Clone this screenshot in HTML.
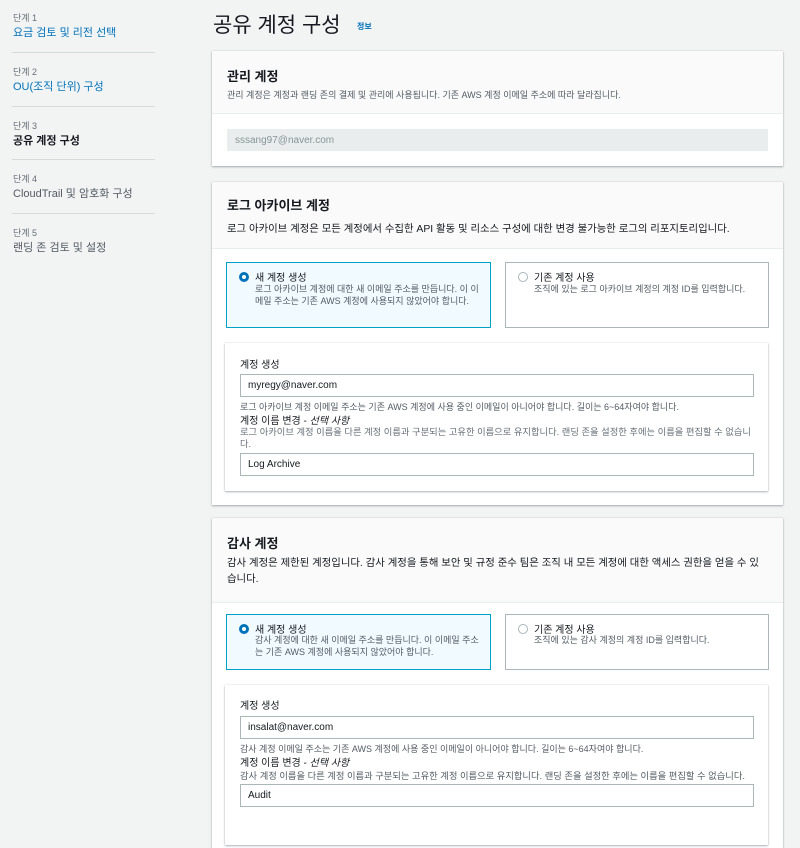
<!DOCTYPE html>
<html><head><meta charset="utf-8"><style>
*{box-sizing:border-box;margin:0;padding:0}
body{width:800px;height:829px;overflow:hidden;background:#f2f3f3;font-family:"Liberation Sans","Noto Sans CJK KR",sans-serif;color:#16191f;position:relative}
.a{position:absolute;white-space:nowrap}
.sl{font-size:9px;color:#687078}
.lk{font-size:11px;color:#0073bb}
.dv{position:absolute;left:12px;width:143px;height:1px;background:#d5dbdb}
.card{position:absolute;left:212px;width:571px;background:#fff;box-shadow:0 1px 2px rgba(0,28,36,.3),0 0 1px rgba(0,28,36,.2)}
.hd{border-bottom:1px solid #eaeded;background:#fafafa}
.inp{position:absolute;border:1px solid #aab7b8;background:#fff;font-size:10px;padding-left:7px;display:flex;align-items:center}
.tile{position:absolute;border:1px solid #aab7b8;background:#fff}
.tile.s{background:#f1faff;border-color:#00a1c9}
.rd{position:absolute;left:12px;top:9px;width:10px;height:10px;border-radius:50%;border:1px solid #aab7b8;background:#fff}
.rd.s{border:3px solid #0073bb}
.t1{font-size:10px}
.t2{font-size:9px;color:#545b64;line-height:12px;white-space:normal}
.sm{font-size:9px;color:#545b64}
</style></head><body>
<div class="a sl" style="left:13px;top:11px">단계 1</div>
<div class="a lk" style="left:13px;top:24px">요금 검토 및 리전 선택</div>
<div class="dv" style="top:52px"></div>
<div class="a sl" style="left:13px;top:65px">단계 2</div>
<div class="a lk" style="left:13px;top:78px">OU(조직 단위) 구성</div>
<div class="dv" style="top:106px"></div>
<div class="a sl" style="left:13px;top:119px">단계 3</div>
<div class="a" style="left:13px;top:132px;font-size:11px;font-weight:bold">공유 계정 구성</div>
<div class="dv" style="top:159px"></div>
<div class="a sl" style="left:13px;top:172px">단계 4</div>
<div class="a" style="left:13px;top:185px;font-size:11px;color:#545b64">CloudTrail 및 암호화 구성</div>
<div class="dv" style="top:213px"></div>
<div class="a sl" style="left:13px;top:226px">단계 5</div>
<div class="a" style="left:13px;top:239px;font-size:11px;color:#545b64">랜딩 존 검토 및 설정</div>

<div class="a" style="left:213px;top:9px;font-size:21px;color:#16191f">공유 계정 구성</div>
<div class="a" style="left:357px;top:21px;font-size:8px;font-weight:bold;color:#0073bb">정보</div>

<div class="card" style="top:51px;height:115px">
<div class="hd" style="height:63px;position:relative">
<div class="a" style="left:15px;top:15px;font-size:13px;font-weight:bold">관리 계정</div>
<div class="a sm" style="left:15px;top:37px">관리 계정은 계정과 랜딩 존의 결제 및 관리에 사용됩니다. 기존 AWS 계정 이메일 주소에 따라 달라집니다.</div>
</div>
<div class="inp" style="left:15px;top:78px;width:541px;height:22px;background:#eaeded;border-color:#eaeded;color:#879596">sssang97@naver.com</div>
</div>

<div class="card" style="top:182px;height:323px">
<div class="hd" style="height:67px;position:relative">
<div class="a" style="left:15px;top:13px;font-size:13px;font-weight:bold">로그 아카이브 계정</div>
<div class="a" style="left:15px;top:38px;font-size:10.4px">로그 아카이브 계정은 모든 계정에서 수집한 API 활동 및 리소스 구성에 대한 변경 불가능한 로그의 리포지토리입니다.</div>
</div>
<div class="tile s" style="left:14px;top:80px;width:265px;height:66px"><div class="rd s"></div>
<div class="a t1" style="left:28px;top:6px">새 계정 생성</div>
<div class="a t2" style="left:28px;top:20px;width:225px">로그 아카이브 계정에 대한 새 이메일 주소를 만듭니다. 이 이메일 주소는 기존 AWS 계정에 사용되지 않았어야 합니다.</div></div>
<div class="tile" style="left:293px;top:80px;width:264px;height:66px"><div class="rd"></div>
<div class="a t1" style="left:28px;top:6px">기존 계정 사용</div>
<div class="a t2" style="left:28px;top:20px">조직에 있는 로그 아카이브 계정의 계정 ID를 입력합니다.</div></div>
<div class="card" style="left:13px;top:161px;width:543px;height:148px">
<div class="a t1" style="left:15px;top:13px">계정 생성</div>
<div class="inp" style="left:15px;top:31px;width:514px;height:23px">myregy@naver.com</div>
<div class="a sm" style="left:15px;top:57px">로그 아카이브 계정 이메일 주소는 기존 AWS 계정에 사용 중인 이메일이 아니어야 합니다. 길이는 6~64자여야 합니다.</div>
<div class="a t1" style="left:15px;top:69px">계정 이름 변경 - <i>선택 사항</i></div>
<div class="a t2" style="left:15px;top:83px;width:520px;color:#687078;font-size:9.3px">로그 아카이브 계정 이름을 다른 계정 이름과 구분되는 고유한 이름으로 유지합니다. 랜딩 존을 설정한 후에는 이름을 편집할 수 없습니다.</div>
<div class="inp" style="left:15px;top:110px;width:514px;height:23px">Log Archive</div>
</div>
</div>

<div class="card" style="top:518px;height:330px">
<div class="hd" style="height:85px;position:relative">
<div class="a" style="left:15px;top:15px;font-size:13px;font-weight:bold">감사 계정</div>
<div class="a" style="left:15px;top:38px;font-size:10.4px;white-space:normal;width:540px;line-height:16px">감사 계정은 제한된 계정입니다. 감사 계정을 통해 보안 및 규정 준수 팀은 조직 내 모든 계정에 대한 액세스 권한을 얻을 수 있습니다.</div>
</div>
<div class="tile s" style="left:14px;top:96px;width:265px;height:56px"><div class="rd s"></div>
<div class="a t1" style="left:28px;top:6px">새 계정 생성</div>
<div class="a t2" style="left:28px;top:19px;width:228px">감사 계정에 대한 새 이메일 주소를 만듭니다. 이 이메일 주소는 기존 AWS 계정에 사용되지 않았어야 합니다.</div></div>
<div class="tile" style="left:293px;top:96px;width:264px;height:56px"><div class="rd"></div>
<div class="a t1" style="left:28px;top:6px">기존 계정 사용</div>
<div class="a t2" style="left:28px;top:19px">조직에 있는 감사 계정의 계정 ID를 입력합니다.</div></div>
<div class="card" style="left:13px;top:167px;width:543px;height:160px">
<div class="a t1" style="left:15px;top:12px">계정 생성</div>
<div class="inp" style="left:15px;top:31px;width:514px;height:23px">insalat@naver.com</div>
<div class="a sm" style="left:15px;top:57px">감사 계정 이메일 주소는 기존 AWS 계정에 사용 중인 이메일이 아니어야 합니다. 길이는 6~64자여야 합니다.</div>
<div class="a t1" style="left:15px;top:69px">계정 이름 변경 - <i>선택 사항</i></div>
<div class="a sm" style="left:15px;top:83px;font-size:9.3px">감사 계정 이름을 다른 계정 이름과 구분되는 고유한 계정 이름으로 유지합니다. 랜딩 존을 설정한 후에는 이름을 편집할 수 없습니다.</div>
<div class="inp" style="left:15px;top:99px;width:514px;height:23px">Audit</div>
</div>
</div>
</body></html>
